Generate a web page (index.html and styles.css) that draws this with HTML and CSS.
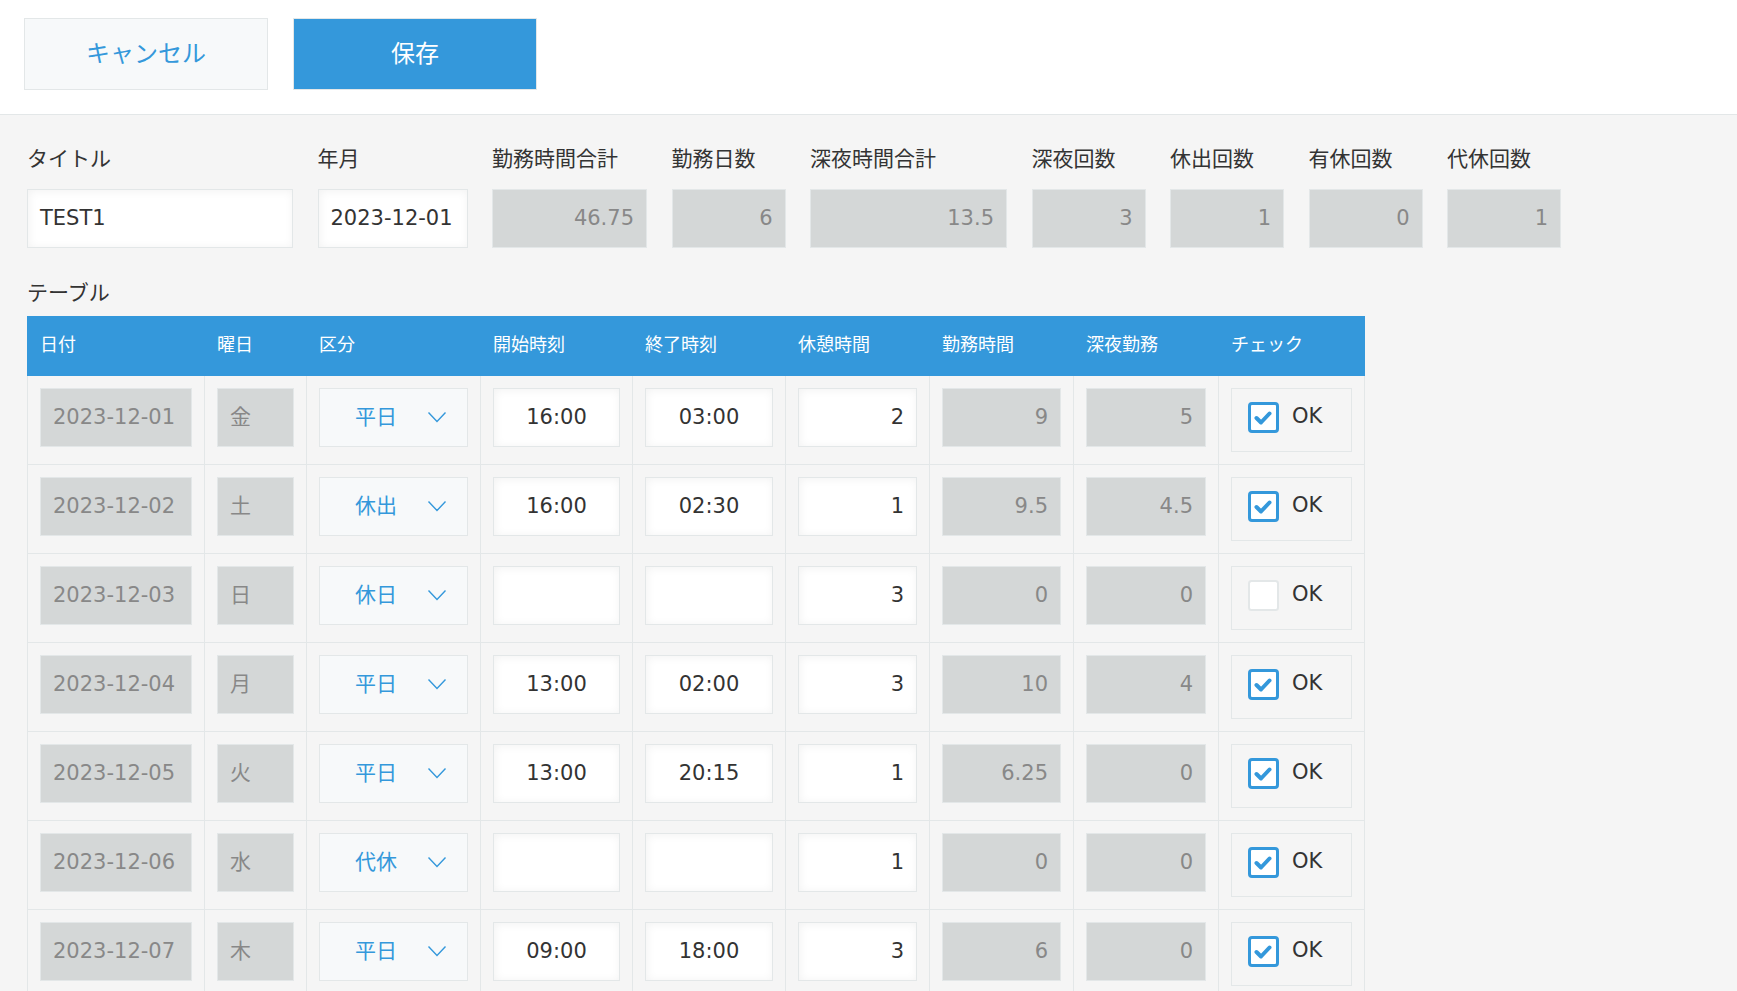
FILE: index.html
```html
<!DOCTYPE html>
<html lang="ja">
<head>
<meta charset="utf-8">
<title>勤務表</title>
<link rel="stylesheet" href="styles.css">
</head>
<body>
<div class="toolbar">
  <button class="btn btn-cancel">キャンセル</button>
  <button class="btn btn-save">保存</button>
</div>

<div class="form">
  <div class="fields">
    <div class="field w-title"><div class="label">タイトル</div><div class="input edit">TEST1</div></div>
    <div class="field w-ym"><div class="label">年月</div><div class="input edit">2023-12-01</div></div>
    <div class="field w-total"><div class="label">勤務時間合計</div><div class="input ro num">46.75</div></div>
    <div class="field w-s"><div class="label">勤務日数</div><div class="input ro num">6</div></div>
    <div class="field w-night"><div class="label">深夜時間合計</div><div class="input ro num">13.5</div></div>
    <div class="field w-s"><div class="label">深夜回数</div><div class="input ro num">3</div></div>
    <div class="field w-s"><div class="label">休出回数</div><div class="input ro num">1</div></div>
    <div class="field w-s"><div class="label">有休回数</div><div class="input ro num">0</div></div>
    <div class="field w-s"><div class="label">代休回数</div><div class="input ro num">1</div></div>
  </div>

  <div class="label table-label">テーブル</div>
  <div class="subtable">
    <div class="row head">
      <div class="cell">日付</div><div class="cell">曜日</div><div class="cell">区分</div><div class="cell">開始時刻</div><div class="cell">終了時刻</div><div class="cell">休憩時間</div><div class="cell">勤務時間</div><div class="cell">深夜勤務</div><div class="cell">チェック</div>
    </div>
    <div id="rows"></div>
  </div>
</div>
<script src="app.js"></script>
</body>
</html>
```
FILE: app.js
```js
var data = [
  ["2023-12-01","金","平日","16:00","03:00","2","9","5",true],
  ["2023-12-02","土","休出","16:00","02:30","1","9.5","4.5",true],
  ["2023-12-03","日","休日","","","3","0","0",false],
  ["2023-12-04","月","平日","13:00","02:00","3","10","4",true],
  ["2023-12-05","火","平日","13:00","20:15","1","6.25","0",true],
  ["2023-12-06","水","代休","","","1","0","0",true],
  ["2023-12-07","木","平日","09:00","18:00","3","6","0",true]
];
var chevron = '<svg class="chev" width="20" height="12" viewBox="0 0 20 12"><polyline points="1.5,1.5 10,10.5 18.5,1.5" fill="none" stroke="#3498db" stroke-width="1.4"/></svg>';
var check = '<svg width="31" height="31" viewBox="0 0 31 31"><rect x="1.5" y="1.5" width="28" height="28" rx="2.5" fill="#fff" stroke="#3498db" stroke-width="3"/><polyline points="8.5,16 13,20.5 21.5,11.5" fill="none" stroke="#3498db" stroke-width="4" stroke-linecap="round" stroke-linejoin="round"/></svg>';
var uncheck = '<svg width="31" height="31" viewBox="0 0 31 31"><rect x="1" y="1" width="29" height="29" rx="2.5" fill="#fff" stroke="#e3e7e8" stroke-width="2"/></svg>';
var html = "";
data.forEach(function (r) {
  html += '<div class="row">' +
    '<div class="cell"><div class="input ro">' + r[0] + '</div></div>' +
    '<div class="cell"><div class="input ro">' + r[1] + '</div></div>' +
    '<div class="cell"><div class="select"><span>' + r[2] + '</span>' + chevron + '</div></div>' +
    '<div class="cell"><div class="input edit center">' + r[3] + '</div></div>' +
    '<div class="cell"><div class="input edit center">' + r[4] + '</div></div>' +
    '<div class="cell"><div class="input edit num">' + r[5] + '</div></div>' +
    '<div class="cell"><div class="input ro num">' + r[6] + '</div></div>' +
    '<div class="cell"><div class="input ro num">' + r[7] + '</div></div>' +
    '<div class="cell"><div class="checkwrap">' + (r[8] ? check : uncheck) + '<span class="ok">OK</span></div></div>' +
    '</div>';
});
document.getElementById("rows").innerHTML = html;
```
FILE: styles.css
```css
html { overflow: hidden; }
* { box-sizing: border-box; }
body {
  margin: 0;
  background: #f5f5f5;
  font-family: "DejaVu Sans", "Noto Sans CJK JP", sans-serif;
  color: #333;
}
.toolbar {
  background: #fff;
  border-bottom: 1px solid #e3e7e8;
  padding: 18px 24px 24px;
  display: flex;
  gap: 25px;
}
.btn {
  width: 244px;
  height: 72px;
  border: 1px solid #e3e7e8;
  font-family: inherit;
  font-size: 24px;
  padding: 0 0 6px;
}
.btn-cancel { background: #f7f9fa; color: #3498db; }
.btn-save { background: #3498db; color: #fff; }

.form { padding: 29px 0 0 27px; }
.fields { display: flex; gap: 24.5px; }
.label { font-size: 21px; line-height: 30px; height: 30px; color: #333; white-space: nowrap; }
.field .label { margin-bottom: 15px; }
.w-title { width: 266px; }
.w-ym { width: 150px; }
.w-total { width: 155px; }
.w-s { width: 114px; }
.w-night { width: 197px; }

.input {
  height: 59px;
  line-height: 56px;
  border: 1px solid #e3e7e8;
  padding: 0 12px;
  font-size: 21px;
  white-space: nowrap;
}
.edit { background: #fff; color: #333; box-shadow: inset 1px 1px 10px #f2f2f2; }
.ro { background: #d4d7d7; color: #888; }
.num { text-align: right; }
.center { text-align: center; }

.table-label { margin-top: 30px; margin-bottom: 8px; }
.subtable { width: 1338px; }
.row {
  display: grid;
  grid-template-columns: 177px 102px 174px 152px 153px 144px 144px 145px 146px;
  border-left: 1px solid #e3e7e8;
}
.row .cell {
  border-right: 1px solid #e3e7e8;
  border-bottom: 1px solid #e3e7e8;
  padding: 12px 12px;
  min-width: 0;
}
.row.head { background: #3498db; border-left-color: #3498db; }
.row.head .cell {
  border-color: #3498db;
  border-bottom: 0;
  height: 60px;
  padding: 0 12px;
  line-height: 58px;
  font-size: 18px;
  color: #fff;
}
.select {
  height: 59px;
  background: #f7f9fa;
  border: 1px solid #e3e7e8;
  display: flex;
  align-items: center;
  justify-content: space-between;
  padding: 0 20px 6px 35px;
  color: #3498db;
  font-size: 21px;
}
.chev { display: block; margin-top: 4px; }
.checkwrap {
  height: 64px;
  border: 1px solid #e3e7e8;
  display: flex;
  align-items: center;
  padding: 0 0 5px 16px;
  gap: 13px;
}
.checkwrap svg { display: block; flex: none; }
.ok { font-size: 21px; color: #333; margin-top: -3px; }
```
